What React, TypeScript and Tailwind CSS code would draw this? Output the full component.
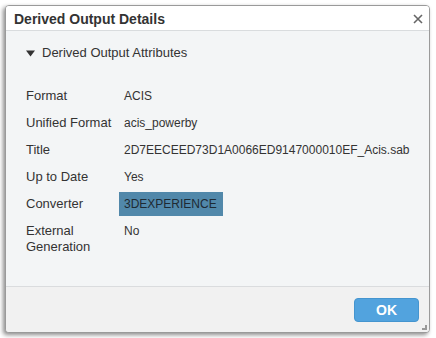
import React from "react";

const rows: { label: React.ReactNode; value: string; hl?: boolean }[] = [
  { label: "Format", value: "ACIS" },
  { label: "Unified Format", value: "acis_powerby" },
  { label: "Title", value: "2D7EECEED73D1A0066ED9147000010EF_Acis.sab" },
  { label: "Up to Date", value: "Yes" },
  { label: "Converter", value: "3DEXPERIENCE", hl: true },
  { label: (<>External<br />Generation</>), value: "No" },
];

export default function App() {
  return (
    <div
      className="w-[436px] h-[338px] bg-white pt-[5px] pl-[5px]"
      style={{ fontFamily: '"Liberation Sans", Arial, sans-serif' }}
    >
      <div className="w-[425px] h-[328px] flex flex-col rounded-[4px] border border-[#9a9a9a] bg-[#f3f5f6] shadow-[-2px_2px_4px_rgba(0,0,0,0.45)] overflow-hidden relative">
        <div className="h-[25px] bg-white border-b border-[#d9dcde] flex items-center justify-between pl-[8px] pr-[6px] shrink-0">
          <span className="text-[14px] font-bold text-[#333] leading-none mt-[1px]">Derived Output Details</span>
          <svg width="10" height="10" viewBox="0 0 10 10" className="mt-[2px]">
            <path d="M1 1L9 9M9 1L1 9" stroke="#666" strokeWidth="1.6" />
          </svg>
        </div>
        <div className="flex-1 px-[20px] pt-[13px]">
          <div className="flex items-center gap-[7px] text-[13px] text-[#333] h-[18px]">
            <svg width="9" height="7" viewBox="0 0 9 7">
              <path d="M0 0.5H9L4.5 6.5Z" fill="#333" />
            </svg>
            <span>Derived Output Attributes</span>
          </div>
          <div className="mt-[22px] flex flex-col gap-[3px] text-[#333]">
            {rows.map((r, i) => (
              <div key={i} className="flex items-baseline">
                <div className="w-[98px] shrink-0 text-[13px] leading-[16px] py-[4px]">{r.label}</div>
                <div
                  className={
                    r.hl
                      ? "bg-[#5188aa] pl-[5px] pr-[6px] -ml-[5px] text-[12px] leading-[16px] py-[4px] text-[#1e2a33] whitespace-nowrap"
                      : "text-[12px] leading-[16px] py-[4px] whitespace-nowrap"
                  }
                >
                  {r.value}
                </div>
              </div>
            ))}
          </div>
        </div>
        <div className="h-[46px] border-t border-[#dadcde] bg-[#f1f1f1] flex items-start justify-end pr-[10px] pt-[11px] shrink-0">
          <button className="w-[65px] h-[24px] rounded-[4px] bg-[#52a3de] border border-[#4595cf] text-white font-bold text-[14px] leading-none">
            OK
          </button>
        </div>
        <svg width="5" height="5" viewBox="0 0 5 5" className="absolute right-[2px] bottom-[2px]">
          <rect x="3" y="0" width="2" height="5" fill="#999" />
          <rect x="0" y="3" width="5" height="2" fill="#999" />
        </svg>
      </div>
    </div>
  );
}
